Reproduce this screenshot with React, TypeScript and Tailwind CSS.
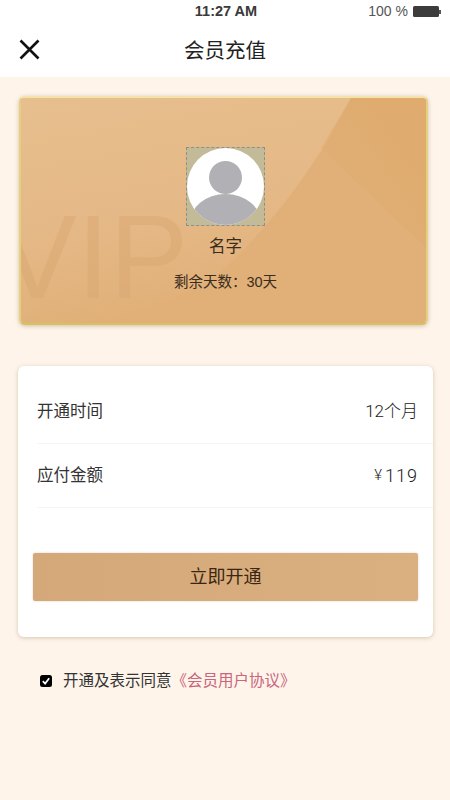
const font = 'font-["Liberation_Sans","Noto_Sans_CJK_SC",sans-serif]';

function Avatar() {
  return (
    <div className="w-[79px] h-[79px] bg-[#c3ba98] border border-dashed border-[#8f9085] flex items-center justify-center">
      <svg width="77" height="77" viewBox="0 0 77 77">
        <defs>
          <clipPath id="avatar-circle">
            <circle cx="38.5" cy="38.5" r="38.5" />
          </clipPath>
        </defs>
        <circle cx="38.5" cy="38.5" r="38.5" fill="#ffffff" />
        <g clipPath="url(#avatar-circle)">
          <circle cx="38.5" cy="29.5" r="16.5" fill="#b1b0b5" />
          <ellipse cx="38.5" cy="76" rx="36" ry="30" fill="#b1b0b5" />
        </g>
      </svg>
    </div>
  );
}

function Row({ label, children }: { label: string; children: React.ReactNode }) {
  return (
    <div className="h-16 ml-[19px] flex items-center justify-between border-b border-[#f8f6f3] pr-[15px]">
      <span className="text-[16.5px] text-[#333333]">{label}</span>
      <span className='text-[#1a1a1a] font-["Roboto","Noto_Sans_CJK_SC",sans-serif] font-light flex items-center'>{children}</span>
    </div>
  );
}

export default function App() {
  return (
    <div className={`w-[450px] h-[800px] bg-[#fef4ea] overflow-hidden ${font}`}>
      <div className="h-[77px] bg-white flex flex-col">
        <div className="h-[23px] relative flex items-center justify-center">
          <span className="text-[14.5px] font-bold text-[#3a3a3a] ml-[2px]">11:27 AM</span>
          <div className="absolute right-[9px] top-[1px] flex items-center gap-[5px]">
            <span className="text-[14px] text-[#555555]">100 %</span>
            <div className="flex items-center">
              <div className="w-[26px] h-[11px] bg-[#3c3c3c] rounded-[1.5px]" />
              <div className="w-[2px] h-[4px] bg-[#555555]" />
            </div>
          </div>
        </div>
        <div className="flex-1 relative flex items-center justify-center">
          <svg className="absolute left-[19px] top-[16px]" width="21" height="21" viewBox="0 0 21 21">
            <path d="M1.5 1.5 L19.5 19.5 M19.5 1.5 L1.5 19.5" stroke="#111111" strokeWidth="2.6" fill="none" />
          </svg>
          <span className="text-[20.5px] text-[#222222] mt-[2px]">会员充值</span>
        </div>
      </div>

      <div className="relative mt-[19px] ml-[19px] w-[409px] h-[229px] rounded-[6px] overflow-hidden border-2 border-t-[#f3e2a9] border-x-[#e4d07e] border-b-[#d6c35e] shadow-[0_1px_4px_rgba(120,90,50,0.35)] bg-[#e1b079] flex flex-col items-center pt-[49px] pl-[4px]">
        <svg className="absolute inset-0" width="405" height="225" viewBox="0 0 405 225">
          <defs>
            <linearGradient id="card-light" x1="0" y1="0" x2="0.25" y2="1">
              <stop offset="0" stopColor="#e7be8e" />
              <stop offset="0.55" stopColor="#e5b987" />
              <stop offset="1" stopColor="#e1b079" />
            </linearGradient>
            <linearGradient id="card-corner" x1="1" y1="0" x2="0" y2="1">
              <stop offset="0.2" stopColor="#dfab6e" />
              <stop offset="1" stopColor="#dfab6e" stopOpacity="0" />
            </linearGradient>
          </defs>
          <path d="M0 0 H330 C300 60 250 130 195 178 C150 205 90 225 60 225 H0 Z" fill="url(#card-light)" />
          <path d="M330 0 H405 V150 L300 50 Z" fill="url(#card-corner)" />
        </svg>
        <span className="absolute left-[-23px] top-[100px] text-[118px] leading-none text-[#d9a873] opacity-50">VIP</span>
        <div className="relative flex flex-col items-center">
          <Avatar />
          <span className="mt-[8px] text-[16.5px] leading-[24px] text-[#3a2c1c]">名字</span>
          <span className="mt-[14px] text-[14.5px] leading-[20px] text-[#3a2c1c]">剩余天数：30天</span>
        </div>
      </div>

      <div className="mt-[41px] ml-[18px] w-[415px] h-[271px] bg-white rounded-[6px] shadow-[0_1px_4px_rgba(120,90,50,0.3)] pt-[14px]">
        <Row label="开通时间">
          <span className="text-[17px]">12个月</span>
        </Row>
        <Row label="应付金额">
          <span className="text-[15px] mr-[3px]">¥</span>
          <span className="text-[18px] tracking-[1px]">119</span>
        </Row>
        <button className="mt-[45px] ml-[15px] w-[385px] h-[48px] bg-gradient-to-r from-[#d4a878] to-[#dbb080] rounded-[2px] text-[18px] text-[#3a2612] shadow-[0_0_2px_rgba(120,90,50,0.3)]">
          立即开通
        </button>
      </div>

      <div className="mt-[32px] ml-[40px] flex items-center gap-[11px]">
        <div className="w-[12px] h-[12px] rounded-[2.5px] bg-black flex items-center justify-center">
          <svg width="10" height="10" viewBox="0 0 10 10">
            <path d="M1.8 5.2 L4.1 7.6 L8.2 2.2" stroke="#ffffff" strokeWidth="1.7" fill="none" />
          </svg>
        </div>
        <span className="text-[15.5px] leading-[24px] text-[#333333]">
          开通及表示同意<span className="text-[#c9657c]">《会员用户协议》</span>
        </span>
      </div>
    </div>
  );
}
